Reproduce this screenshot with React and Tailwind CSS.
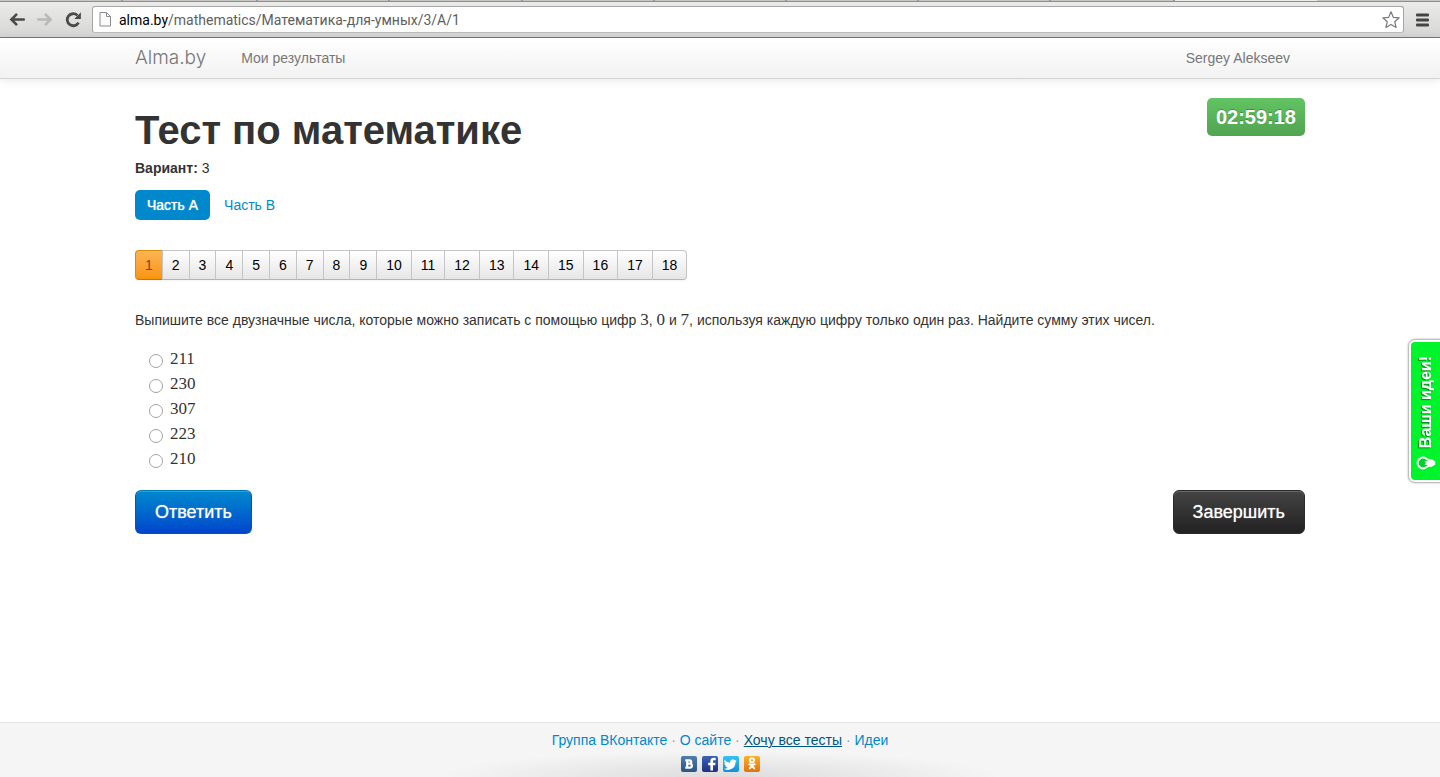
import React, { useState } from "react";

const SANS = "font-['Liberation_Sans',Arial,sans-serif]";
const SERIF = "font-['Liberation_Serif','Times_New_Roman',serif]";

const QUESTIONS = Array.from({ length: 18 }, (_, i) => i + 1);
const ANSWERS = ["211", "230", "307", "223", "210"];
const TABS = [
  "w-[123px]", "w-[135px]", "w-[132px]", "w-[133px]", "w-[132px]", "w-[132px]", "w-[132px]", "w-[132px]", "w-[124px]",
];

function BrowserBar() {
  return (
    <header className="border-b border-[#777777] bg-linear-to-b from-[#ececea] to-[#d6d6d6]">
      <div className="flex h-0.5 overflow-hidden border-b border-[#8e8e8e] bg-[#c6c7c5]">
        {TABS.map((w, i) => (
          <div key={i} className={`${w} shrink-0 border-r-2 border-[#999999]`} />
        ))}
        <div className="w-[142px] shrink-0 bg-[#ececea]" />
      </div>
      <div className="flex h-[35px] items-center pl-[9px] pr-[11px]">
        <button type="button" aria-label="Назад" className="mr-3 flex">
          <svg width="16" height="16" viewBox="0 0 16 16" fill="none" stroke="#4a4a4a" strokeWidth="2.6">
            <path d="M15.8 7.5H2.5M8 1.9 2.4 7.5 8 13.1" />
          </svg>
        </button>
        <button type="button" aria-label="Вперёд" className="mr-3 flex">
          <svg width="16" height="16" viewBox="0 0 16 16" fill="none" stroke="#b9b9b9" strokeWidth="2.6">
            <path d="M.2 7.5h13.3M8 1.9 13.6 7.5 8 13.1" />
          </svg>
        </button>
        <button type="button" aria-label="Обновить" className="mr-2.5 flex">
          <svg width="17" height="16" viewBox="0 0 17 16">
            <path d="M13.5 10.6A6 6 0 1 1 12.4 3.4" fill="none" stroke="#4a4a4a" strokeWidth="2.8" />
            <path d="M15.9.3v6.6H9.3z" fill="#4a4a4a" />
          </svg>
        </button>
        <div className="flex h-[27px] min-w-0 flex-1 items-center rounded-[3px] border border-[#a6a6a6] border-b-[#bcbcbc] bg-white px-[6px]">
          <svg width="13" height="17" viewBox="0 0 13 17" fill="#fafafa" stroke="#8c8c8c" className="shrink-0">
            <path d="M1 1.5h6.5l4 4v9.5H1zM7.5 1.5v4h4" />
          </svg>
          <div className="ml-[7px] min-w-0 flex-1 truncate font-['Roboto',sans-serif] text-sm leading-5 text-[#5e5e5e]">
            <span className="text-black">alma.by</span>/mathematics/Математика-для-умных/3/A/1
          </div>
          <button type="button" aria-label="Добавить в закладки" className="-mr-1 flex">
            <svg width="20" height="20" viewBox="0 0 20 20" fill="white" stroke="#7a7a7a" strokeWidth="1.2" strokeLinejoin="round">
              <path d="M10 1.8 12.3 7.3 18.2 7.8 13.7 11.7 15.1 17.5 10 14.4 4.9 17.5 6.3 11.7 1.8 7.8 7.7 7.3z" />
            </svg>
          </button>
        </div>
        <button type="button" aria-label="Меню" className="ml-3 flex">
          <svg width="13" height="14" viewBox="0 0 13 14" fill="#444444">
            <rect width="13" height="3" y=".5" rx="1" />
            <rect width="13" height="3" y="5.5" rx="1" />
            <rect width="13" height="3" y="10.5" rx="1" />
          </svg>
        </button>
      </div>
    </header>
  );
}

function SocialIcon({ label, from, to, children }) {
  return (
    <a href="#" aria-label={label} className={`flex size-4 items-center justify-center overflow-hidden rounded-xs bg-linear-to-b ${from} ${to}`}>
      {children}
    </a>
  );
}

export default function App() {
  const [answer, setAnswer] = useState(null);
  return (
    <div className={`flex min-h-screen flex-col bg-white text-sm leading-5 text-[#333333] ${SANS}`}>
      <BrowserBar />
      <nav className="border-b border-[#d4d4d4] bg-linear-to-b from-white to-[#f2f2f2] text-[#777777] shadow-[0_1px_10px_rgba(0,0,0,0.1)]">
        <div className="mx-auto flex h-10 w-full max-w-[1170px] items-center">
          <a href="#" className="font-['Inter',sans-serif] text-[19px] font-light">Alma.by</a>
          <a href="#" className="ml-[35px]">Мои результаты</a>
          <a href="#" className="ml-auto mr-[15px]">Sergey Alekseev</a>
        </div>
      </nav>

      <main className="mx-auto w-full max-w-[1170px] flex-1 pt-[19px]">
        <div className="flex items-start justify-between">
          <div className="pt-3">
            <h1 className="text-[40px] font-bold leading-10">Тест по математике</h1>
            <p className="mt-2"><strong>Вариант:</strong> 3</p>
          </div>
          <div className="rounded-[5px] bg-linear-to-b from-[#62c462] to-[#51a351] px-[9px] py-[9px] text-xl font-bold leading-5 text-white [text-shadow:0_-1px_0_rgba(0,0,0,0.25)]">
            02:59:18
          </div>
        </div>

        <div className="mt-3 flex gap-0.5">
          <button type="button" className="rounded-[5px] bg-[#0088cc] px-3 py-[5px] text-white [text-shadow:0_0_1px_white]">Часть А</button>
          <button type="button" className="rounded-[5px] px-3 py-[5px] text-[#0088cc]">Часть В</button>
        </div>

        <div className="mt-[30px] flex w-fit rounded-[4px] shadow-[0_1px_2px_rgba(0,0,0,0.05)]">
          {QUESTIONS.map((n) => (
            <button
              key={n}
              type="button"
              className={
                n === 1
                  ? "h-[30px] rounded-l-[4px] border border-r-0 border-[#dd8a10] border-b-[#c67605] bg-linear-to-b from-[#fbb450] to-[#f89406] px-[9px] text-[#953b10]"
                  : "h-[30px] border border-r-0 border-[#c5c5c5] border-b-[#b3b3b3] bg-linear-to-b from-white to-[#e6e6e6] px-[9px] text-black last:rounded-r-[4px] last:border-r"
              }
            >
              {n}
            </button>
          ))}
        </div>

        <form onSubmit={(e) => e.preventDefault()}>
          <fieldset>
            <legend className="pt-[30px]">
              Выпишите все двузначные числа, которые можно записать с помощью цифр{" "}
              <span className={`text-[17px] ${SERIF}`}>3</span>, <span className={`text-[17px] ${SERIF}`}>0</span> и{" "}
              <span className={`text-[17px] ${SERIF}`}>7</span>, используя каждую цифру только один раз. Найдите сумму этих чисел.
            </legend>
            <div className="ml-[14px] pt-4">
              {ANSWERS.map((a) => (
                <label key={a} className="flex h-[25px] w-fit items-center">
                  <input
                    type="radio"
                    name="answer"
                    value={a}
                    checked={answer === a}
                    onChange={() => setAnswer(a)}
                    className="mt-1 size-[14px] appearance-none rounded-full border border-[#a3a3a3] bg-white checked:border-4 checked:border-[#0088cc]"
                  />
                  <span className={`ml-[7px] text-[17px] ${SERIF}`}>{a}</span>
                </label>
              ))}
            </div>
          </fieldset>
          <div className="mt-[19px] flex justify-between text-lg text-white">
            <button type="submit" className="h-11 rounded-md border border-[#0055bb] border-t-[#0077b8] bg-linear-to-b from-[#0088cc] to-[#0044cc] px-[19px] shadow-[inset_0_1px_0_rgba(255,255,255,0.2)] [text-shadow:0_0_1px_rgba(255,255,255,0.7)]">Ответить</button>
            <button type="button" className="h-11 rounded-md border border-[#2b2b2b] bg-linear-to-b from-[#444444] to-[#222222] px-[19px] shadow-[inset_0_1px_0_rgba(255,255,255,0.2)] [text-shadow:0_0_1px_rgba(255,255,255,0.7)]">Завершить</button>
          </div>
        </form>
      </main>

      <aside className="fixed right-0 top-[340px]">
        <a href="#" className="flex h-[142px] w-[31px] flex-col items-center justify-end rounded-l-md border-2 border-r-0 border-white bg-[#00f42c] pb-[10px] text-base font-bold text-white shadow-[0_0_2px_1px_rgba(0,0,0,0.35)]">
          <span className="mb-2 rotate-180 leading-5 [text-shadow:-1px_-1px_1px_rgba(0,0,0,0.45)] [writing-mode:vertical-rl]">Ваши идеи!</span>
          <svg width="20" height="14" viewBox="0 0 20 14" fill="none">
            <path d="M7 .6c3 0 4 2.2 6.3 2.6h2.4l3.6 2.4v2.8l-3.6 2.4h-2.4C11 11.2 10 13.4 7 13.4A6.4 6.4 0 1 1 7 .6z" fill="#fff" />
            <path d="M7 2.6c2.2 0 3.4 1.8 5 2.5L8.6 5 10 7 8.6 9l3.4-.1c-1.600.7-2.800 2.500-5 2.500a4.400 4.400 0 1 1 0-8.800z" fill="#00d428" />
          </svg>
        </a>
      </aside>

      <footer className="flex h-[55px] flex-col items-center border-t border-[#e5e5e5] bg-[#f5f5f5] bg-[radial-gradient(ellipse_280px_26px_at_50%_100%,#dcdcdc,transparent)] pt-[7px] text-[#999999]">
        <p>
          <a href="#" className="text-[#0088cc]">Группа ВКонтакте</a> · <a href="#" className="text-[#0088cc]">О сайте</a> ·{" "}
          <a href="#" className="text-[#005580] underline">Хочу все тесты</a> · <a href="#" className="text-[#0088cc]">Идеи</a>
        </p>
        <div className="mt-1.5 flex gap-[5px]">
          <SocialIcon label="ВКонтакте" from="from-[#4f7eae]" to="to-[#2c5580]">
            <svg width="16" height="16" viewBox="0 0 16 16" fill="none" stroke="#fff" strokeWidth="2.2">
              <path d="M6.2 4.400h2.300c2.300 0 2.300 3.300 0 3.300H6.200h2.700c2.600 0 2.600 3.900 0 3.900H6.200zM4.300 4.400h2M4.300 11.600h2" />
            </svg>
          </SocialIcon>
          <SocialIcon label="Facebook" from="from-[#3c64b4]" to="to-[#1f3180]">
            <svg width="16" height="16" viewBox="0 0 16 16" fill="#fff">
              <path d="M8.4 14.500V9.300H6.200V6.700h2.200V4.900c0-2.500 1.300-3.200 3.400-3.200.9 0 1.600.1 1.900.2v2.300h-1.400c-1.100 0-1.300.5-1.300 1.400v1.100h2.600l-.4 2.600H11v5.200z" />
            </svg>
          </SocialIcon>
          <SocialIcon label="Twitter" from="from-[#36c2f5]" to="to-[#168fd9]">
            <svg width="13" height="13" viewBox="0 0 24 24" fill="#fff">
              <path d="M23.6 4.9a9.9 9.9 0 0 1-2.8.8 4.9 4.9 0 0 0 2.1-2.7 9.7 9.7 0 0 1-3.1 1.2 4.9 4.9 0 0 0-8.4 4.5A13.9 13.9 0 0 1 1.3 3.5a4.9 4.9 0 0 0 1.5 6.5 4.8 4.8 0 0 1-2.2-.6v.1a4.9 4.9 0 0 0 3.9 4.8 4.9 4.9 0 0 1-2.2.1 4.9 4.9 0 0 0 4.6 3.4A9.8 9.8 0 0 1 0 19.8 13.9 13.9 0 0 0 21.2 7.4a10 10 0 0 0 2.4-2.5z" />
            </svg>
          </SocialIcon>
          <SocialIcon label="Одноклассники" from="from-[#fbb02a]" to="to-[#e27208]">
            <svg width="16" height="16" viewBox="0 0 16 16" fill="none" stroke="#fff" strokeWidth="1.9" strokeLinecap="round">
              <circle cx="8" cy="4.300" r="2.100" />
              <path d="M5.300 8.200q2.700 1.500 5.400 0M8 9.800 5.700 12.400M8 9.800l2.300 2.600" />
            </svg>
          </SocialIcon>
        </div>
      </footer>
    </div>
  );
}
